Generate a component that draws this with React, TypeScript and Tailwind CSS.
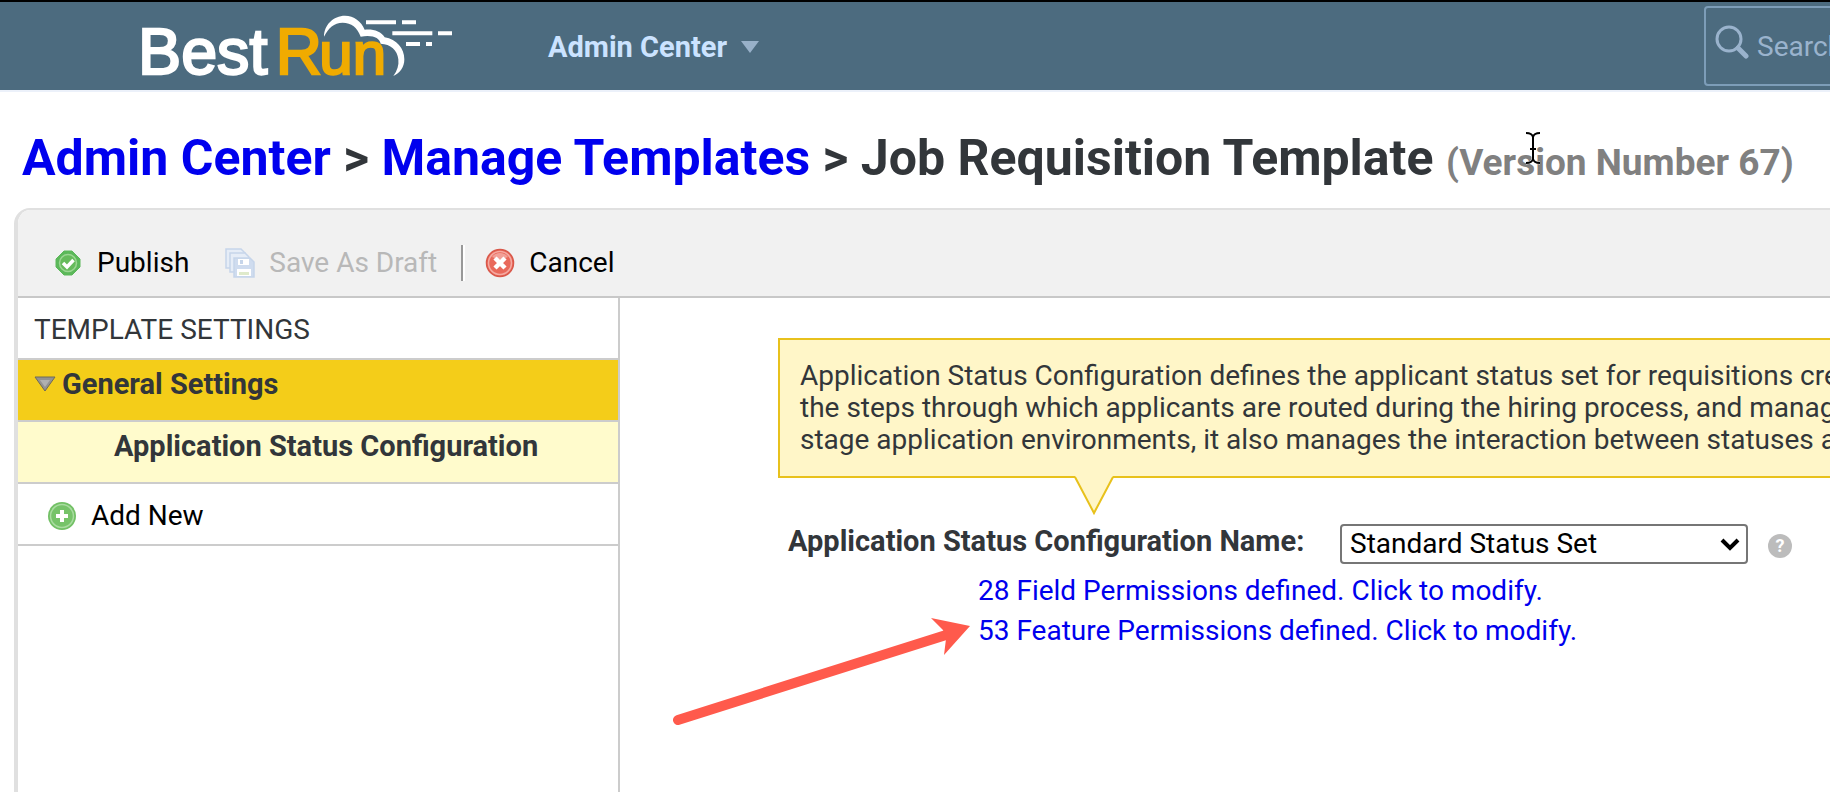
import React from 'react';

const calloutLines = [
  'Application Status Configuration defines the applicant status set for requisitions created',
  'the steps through which applicants are routed during the hiring process, and manages',
  'stage application environments, it also manages the interaction between statuses and',
];

const permissionLinks = [
  '28 Field Permissions defined. Click to modify.',
  '53 Feature Permissions defined. Click to modify.',
];

const Logo = () => (
  <svg width="324" height="88" viewBox="48 6 972 264" role="img" aria-label="BestRun">
    <g fontFamily="'Liberation Sans', Arial, sans-serif" fontSize="194" strokeWidth="7">
      <text x="54" y="223" fill="#fff" stroke="#fff">Best</text>
      <text x="467" y="223" fontSize="192" fill="#f0ab00" stroke="#f0ab00">R</text>
      <text x="598" y="223" fontSize="180" fill="#f0ab00" stroke="#f0ab00">un</text>
    </g>
    <path
      fill="#fff"
      d="M612 110C612 75 640 47 675 47C702 47 724 64 734 89C757 86 784 93 794 112C830 118 853 145 853 178C853 202 840 219 820 228C832 212 837 196 835 178C832 150 812 132 782 131C778 114 760 104 722 110C712 82 694 68 668 68C642 68 625 84 612 110Z"
    />
    <path
      stroke="#fff"
      strokeWidth="12"
      d="M738 67H828M846 67H888M817 100H937M954 100H996M858 132H900M918 132H936"
    />
  </svg>
);

const PublishIcon = () => (
  <svg width="26" height="26" viewBox="0 0 26 26" aria-hidden="true">
    <path d="M9 1h8l8 8v8l-8 8H9l-8-8V9z" fill="#5cb85a" stroke="#5cb85a" strokeWidth="1" strokeLinejoin="round" />
    <circle cx="13" cy="13" r="8.5" fill="#66bb5c" stroke="#9bd692" strokeWidth="1.5" />
    <path d="M8 13l4 4 6.500-7" fill="none" stroke="#fff" strokeWidth="3.500" />
  </svg>
);

const DraftIcon = () => (
  <svg width="30" height="30" viewBox="0 0 30 30" aria-hidden="true">
    <g fill="#e6edf7" stroke="#c6d5ea" strokeWidth="1.500">
      <path d="M1 1h15l4 4v15H1z" />
      <path d="M5 5h15l4 4v15H5z" />
      <path d="M9 10h16l4 4v15H9z" fill="#cfdcef" />
    </g>
    <path d="M13 11h11v6H13z" fill="#fff" />
    <path d="M15 12h3v4h-3z" fill="#c6d5ea" />
    <path d="M12 21h14v7H12z" fill="#fff" />
    <path d="M14 24h10v3H14z" fill="#dfeacb" />
  </svg>
);

const CancelIcon = () => (
  <svg width="30" height="30" viewBox="0 0 30 30" aria-hidden="true">
    <circle cx="15" cy="15" r="13.5" fill="#e9695b" stroke="#d9584a" strokeWidth="1.500" />
    <circle cx="15" cy="15" r="11.5" fill="none" stroke="#f5aaa2" strokeWidth="1.500" />
    <path d="M7 9a10 10 0 0 1 16 0l-8 3z" fill="#f2a097" />
    <path d="M10 10l10 10M20 10L10 20" stroke="#fff" strokeWidth="4.500" />
  </svg>
);

const AddIcon = () => (
  <svg width="30" height="30" viewBox="0 0 30 30" aria-hidden="true">
    <circle cx="15" cy="15" r="14" fill="#72c065" />
    <circle cx="15" cy="15" r="11.500" fill="#76c369" stroke="#a9dca0" strokeWidth="1.500" />
    <path d="M15 9v12M9 15h12" stroke="#fff" strokeWidth="4" />
  </svg>
);

const App = () => {
  return (
    <div className="relative flex min-h-screen flex-col overflow-hidden bg-white font-[Roboto,'Noto_Sans',sans-serif] text-[28px] leading-8 text-[#32363a]">
      <header className="flex shrink-0 items-center border-t-2 border-b-2 border-t-black border-b-[#ecf1fa] bg-[#4c6b7f] pl-[136px]">
        <Logo />
        <button type="button" className="ml-[88px] flex items-center gap-[14px] pt-[2px] text-[29px] font-bold text-[#cbe3ff]">
          Admin Center
          <svg width="18" height="12" viewBox="0 0 18 12" aria-hidden="true">
            <path d="M0 0h18L9 12z" fill="#98b1c9" />
          </svg>
        </button>
        <label className="-mr-[174px] ml-auto flex h-20 w-[300px] shrink-0 items-center gap-2 rounded border-2 border-[#7d9db8] pl-[9px]">
          <svg width="34" height="34" viewBox="0 0 34 34" fill="none" stroke="#9ab3cd" className="mb-2" aria-hidden="true">
            <circle cx="14" cy="14" r="12" strokeWidth="3" />
            <path d="M23 23l8 8" strokeWidth="5" strokeLinecap="round" />
          </svg>
          <input
            type="text"
            aria-label="Search"
            placeholder="Search"
            className="w-[200px] bg-transparent pt-[2px] outline-none placeholder:text-[#9ab3cd]"
          />
        </label>
      </header>

      <h1 className="h-[116px] px-[22px] pt-[36px] text-[50px] leading-[60px] font-bold whitespace-nowrap">
        <a href="#admin" className="text-[#0000ee]">Admin Center</a>
        {' > '}
        <a href="#templates" className="text-[#0000ee]">Manage Templates</a>
        {' > Job Requisition Template '}
        <span className="text-[37px] leading-none text-[#808080]">(Version Number 67)</span>
      </h1>

      <div className="ml-[14px] flex flex-1 flex-col overflow-hidden rounded-tl-2xl border-t-2 border-l-4 border-[#e0e0e0]">
        {/* Toolbar */}
        <div className="flex h-[88px] items-center border-b-2 border-[#c8c8c8] bg-[#f1f1f1] pt-5 pl-[37px] text-black">
          <button type="button" className="flex items-center gap-4">
            <PublishIcon />
            Publish
          </button>
          <button type="button" disabled className="ml-9 flex items-center gap-[14px] text-[#b8b8b8]">
            <DraftIcon />
            Save As Draft
          </button>
          <div className="ml-6 h-9 w-1 border-r-2 border-l-2 border-r-white border-l-[#999]" />
          <button type="button" className="ml-5 flex items-center gap-[14px]">
            <CancelIcon />
            Cancel
          </button>
        </div>

        <div className="flex flex-1">
          {/* Sidebar */}
          <nav className="w-[602px] shrink-0 border-r-2 border-[#ccc]">
            <h2 className="h-[62px] border-b-2 border-[#ccc] px-4 pt-4">TEMPLATE SETTINGS</h2>
            <div className="flex h-[62px] items-start gap-[6px] border-b-2 border-[#ccc] bg-[#f4cd19] px-4 pt-2 text-[29px] font-bold">
              <svg width="22" height="16" viewBox="0 0 22 16" className="mt-2" aria-hidden="true">
                <path d="M1 1h20L11 15z" fill="#929292" stroke="#6f6a58" strokeWidth="1" />
                <path d="M6 4h10l-5 7z" fill="#b0b0b0" />
              </svg>
              General Settings
            </div>
            <div className="h-[62px] border-b-2 border-[#ccc] bg-[#fffbcc] pt-2 pl-24 text-[29px] font-bold">
              Application Status Configuration
            </div>
            <button type="button" className="flex h-[62px] w-full items-center gap-[14px] border-b-2 border-[#ccc] pt-1 pl-[29px] text-black">
              <AddIcon />
              Add New
            </button>
          </nav>

          {/* Content */}
          <main className="min-w-0 flex-1 overflow-hidden pt-10 pl-[158px]">
            <div className="relative border-2 border-r-0 border-[#e8c11c] bg-[#fff6c8] px-5 pt-[20px] pb-[20px] whitespace-nowrap">
              {calloutLines.map((line) => (
                <p key={line}>{line}</p>
              ))}
              <svg width="40" height="40" viewBox="0 0 40 40" className="absolute top-full left-[294px]" aria-hidden="true">
                <path d="M1 0L20 38L39 0z" fill="#fff6c8" />
                <path d="M1 1L20 37L39 1" fill="none" stroke="#e8c11c" strokeWidth="2" />
              </svg>
            </div>

            <div className="mt-[46px] flex items-center pl-[10px]">
              <label htmlFor="config-name" className="w-[552px] shrink-0 pb-1.5 text-[29px] font-bold whitespace-nowrap">
                Application Status Configuration Name:
              </label>
              <div className="relative">
                <select
                  id="config-name"
                  className="h-10 w-[408px] appearance-none rounded border-2 border-[#767676] bg-white pl-2 leading-8 text-black"
                >
                  <option>Standard Status Set</option>
                </select>
                <svg width="20" height="14" viewBox="0 0 20 14" className="pointer-events-none absolute top-[14px] right-2" aria-hidden="true">
                  <path d="M2 2l8 8 8-8" fill="none" stroke="#000" strokeWidth="4" />
                </svg>
              </div>
              <button type="button" aria-label="Help" className="mt-1 ml-5 flex size-6 items-center justify-center rounded-full bg-[#bcbcbc] text-lg leading-6 font-bold text-white">
                ?
              </button>
            </div>

            <div className="mt-[7px] flex flex-col items-start pl-[200px]">
              {permissionLinks.map((text) => (
                <a key={text} href="#permissions" className="leading-10 text-[#0000ee]">
                  {text}
                </a>
              ))}
            </div>
          </main>
        </div>
      </div>

      {/* Annotation arrow */}
      <svg width="300" height="110" viewBox="0 0 300 110" className="pointer-events-none absolute top-[616px] left-[672px]" aria-hidden="true">
        <path d="M6 104L274 19" stroke="#ff5a4c" strokeWidth="10" strokeLinecap="round" />
        <path d="M298 10L259 2L271 14L274 23L272 39z" fill="#ff5a4c" />
      </svg>

      {/* Text cursor */}
      <svg width="16" height="34" viewBox="0 0 16 34" className="pointer-events-none absolute top-[131px] left-[1525px]" fill="none" aria-hidden="true">
        <path d="M1 2q6 0 7 4q1-4 7-4M8 5v24M1 32q6 0 7-4q1 4 7 4M5 18h6" stroke="#fff" strokeWidth="3" />
        <path d="M1 2q6 0 7 4q1-4 7-4M8 5v24M1 32q6 0 7-4q1 4 7 4M5 18h6" stroke="#000" strokeWidth="2" />
      </svg>
    </div>
  );
};

export default App;
